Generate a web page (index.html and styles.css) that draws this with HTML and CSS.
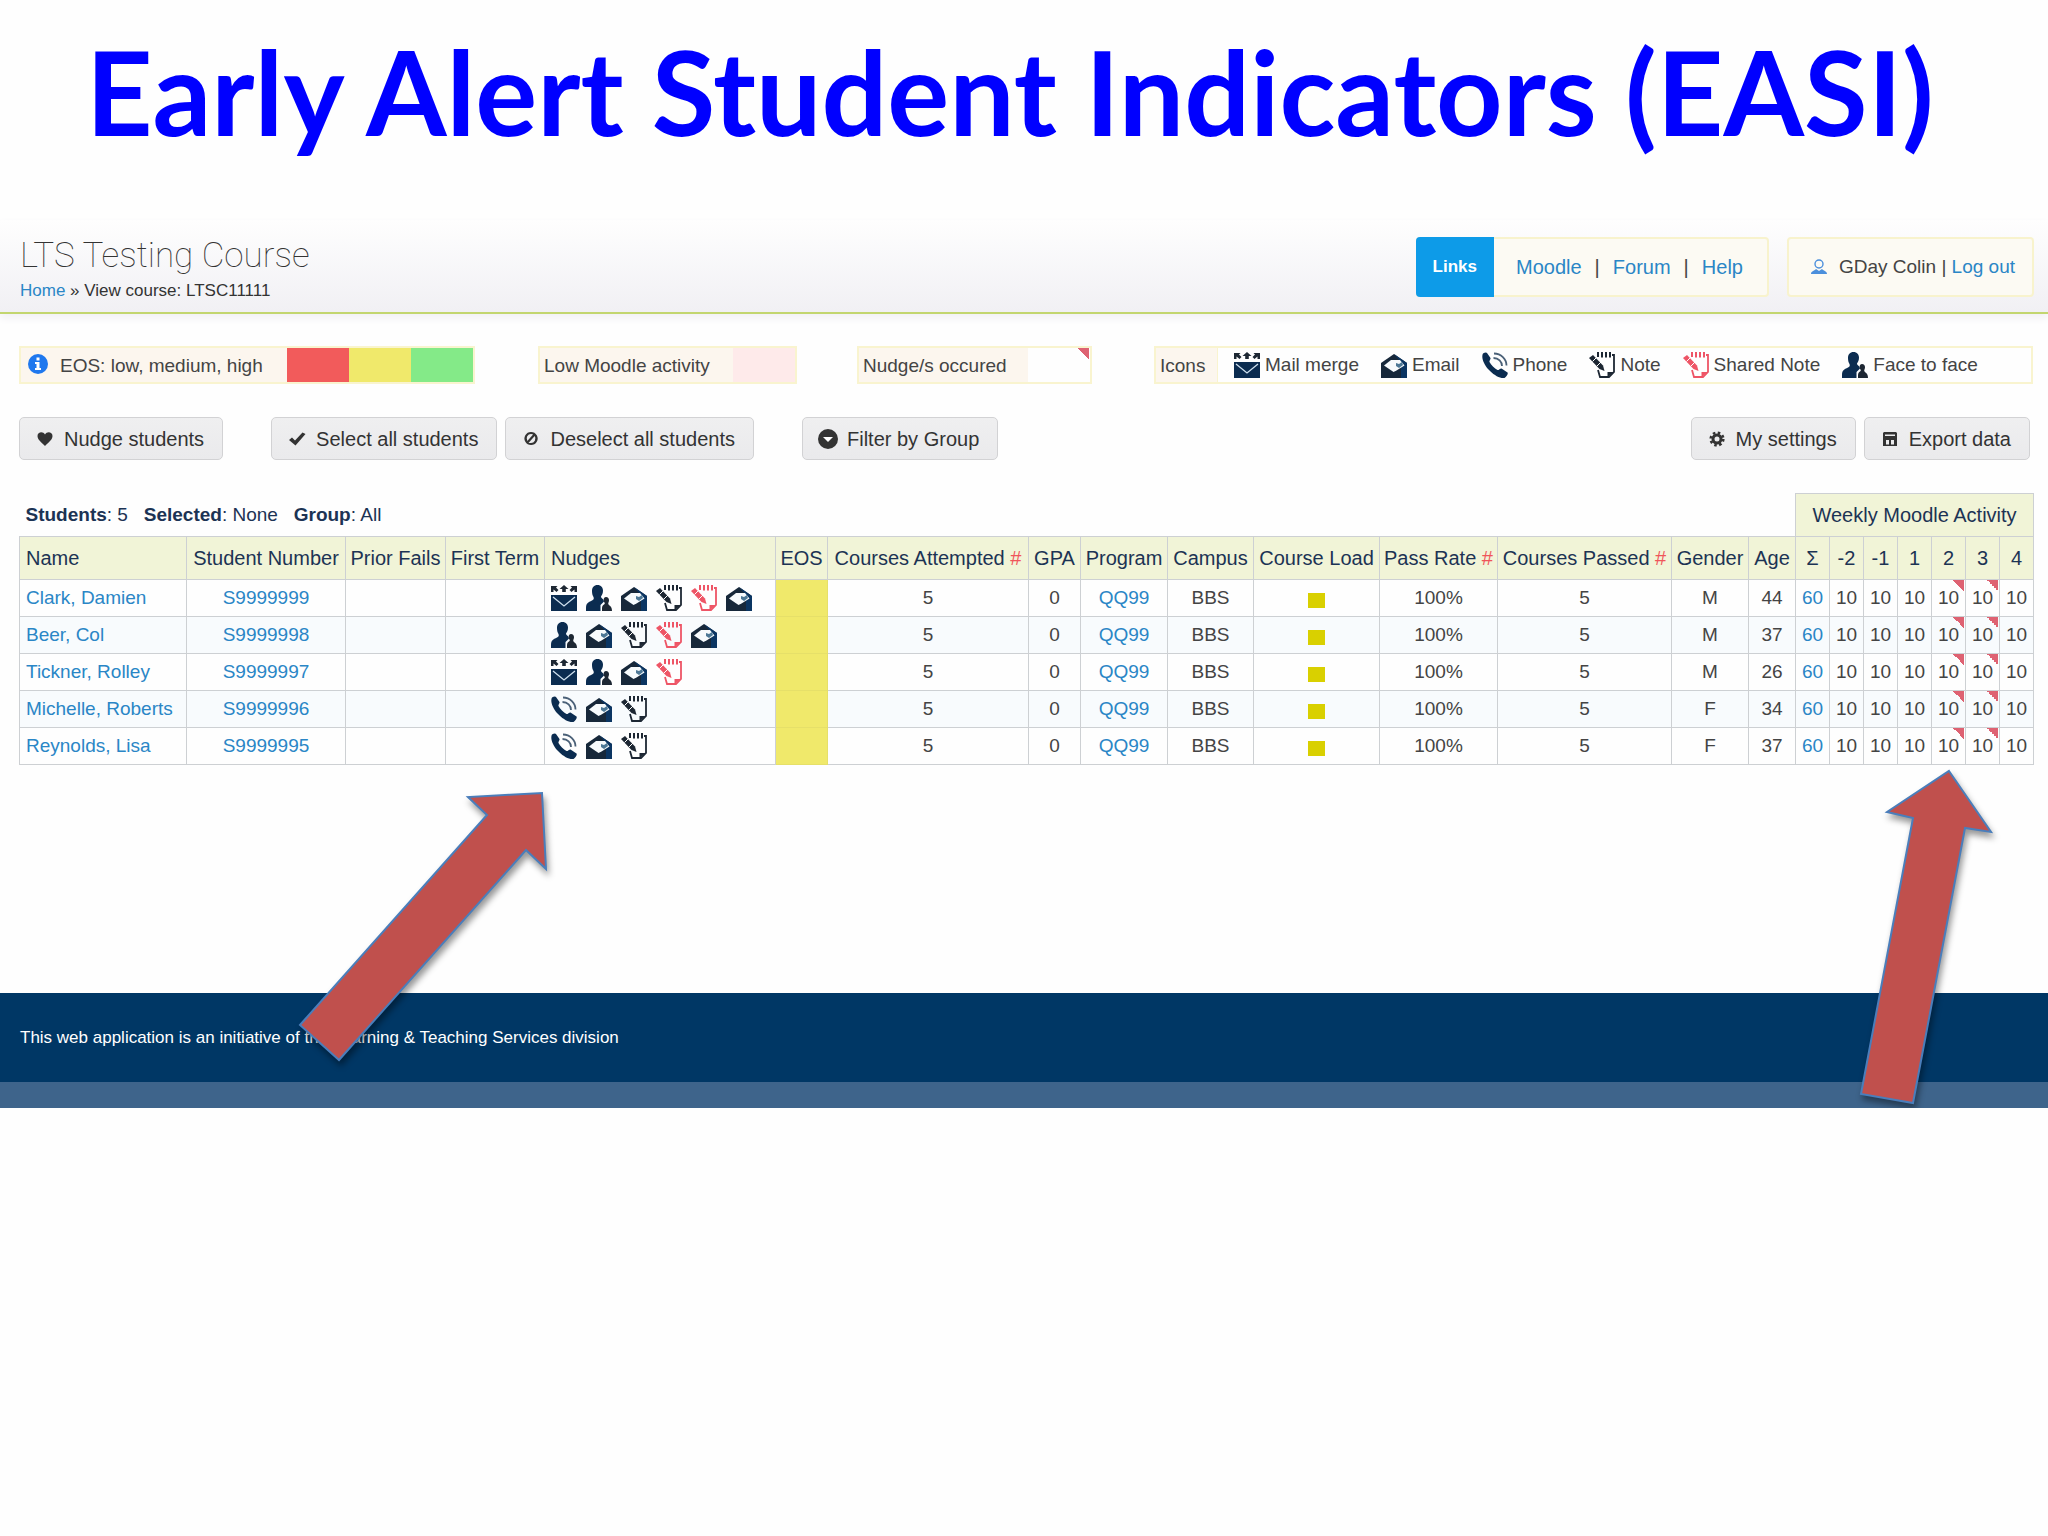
FILE: index.html
```html
<!DOCTYPE html>
<html lang="en">
<head>
    <meta charset="UTF-8">
    <meta name="viewport" content="width=device-width, initial-scale=1.0">
    <title>Early Alert Student Indicators (EASI)</title>
    <link rel="stylesheet" href="styles.css">
</head>
<body>
    <!-- icon set -->
    <svg class="sprite" aria-hidden="true">
        <symbol id="i-merge" viewBox="0 0 26 26">
            <path fill="#1d2733" d="M0 1h6.500L5 2.500 7.500 5 5.500 7 2.500 4.500V7H0zM13 0l4.500 4H14.800v3h-3.600V4H8.500zM26 1h-6.500L21 2.500 18.500 5l2 2 3-2.500V7H26z"/>
            <path fill="#0b2c50" d="M0 10h26v16H0z"/>
            <path fill="none" stroke="#cfe0ee" stroke-width="1.300" d="M2 12l11 9 11-9"/>
        </symbol>
        <symbol id="i-face" viewBox="0 0 26 26">
            <path fill="#0b2c50" d="M11.500 0C15 0 17 2.500 17 5.500c0 3-1 4.500-2 6 0 2 3 2.500 3 5L14.500 20v6H0v-3c0-5 2-5.500 6-7.500 2-1 2-2 1.500-3.500C6.500 10.500 6 8.500 6 6c0-3.500 2-6 5.500-6z"/>
            <path fill="#1d2733" d="M20 12c2 0 3 1.300 3 3.200 0 1.500-.6 2.300-.8 3.300.3 2.500 3.800 1.500 3.800 7.500H16c0-4 0-5.500 2-6.500 1-.5 1-1.500.3-2.300-.5-.7-.7-1.300-.7-2.200 0-1.800 1-3 2.400-3z"/>
        </symbol>
        <symbol id="i-email" viewBox="0 0 26 26">
            <path fill="#17283a" d="M13 2l13 9v15H0V11z"/>
            <path fill="#0b3562" d="M13 2l13 9v15H20V10z"/>
            <path fill="#f7fbfd" d="M3 13.500L10 8h9l4.500 5.500-8 5-3 1.500z"/>
            <path fill="#4d7896" d="M15 11l3 1 3-2 1 3-4 3-3-2z"/>
        </symbol>
        <symbol id="i-phone" viewBox="0 0 26 26">
            <path fill="#0b2c50" d="M1 1.500C2.500.5 4.500 0 5 1l3.500 5c.5 1-1.500 3-1 4 1.500 3 5 6.500 8 8 1 .5 3-2 4-1.500l6 4c1 1-1 4-3 5.500-4 1-11-3-16-8.500S-1 5 1 1.500z"/>
            <path fill="none" stroke="#4a6077" stroke-width="1.800" d="M12 1.500c7 0 12.500 5.500 12.500 12M11.500 6c5 0 8.500 3.500 8.500 8"/>
        </symbol>
        <symbol id="i-note" viewBox="0 0 26 26">
            <path fill="none" stroke="currentColor" stroke-width="1.800" d="M23 3h2v17l-5 5h-9l-2-7"/>
            <path fill="currentColor" d="M8 0h2v5H8zM12 0h2v5.500h-2zM16 0h2v5.500h-2zM20 0h2v5.500h-2zM18.500 25v-5H25z"/>
            <path fill="currentColor" d="M0 6l4-3 10 10.500 1.500 5.500-5-2z"/>
            <path fill="none" stroke="#fff" stroke-width="1" d="M3.500 9.500l4-4M8 14l4-4"/>
        </symbol>
        <symbol id="i-info" viewBox="0 0 20 20">
            <circle cx="10" cy="10" r="10" fill="#1f78ee"/>
            <path fill="#fff" d="M8.500 3.500h3v3h-3zM7 8h4.500v6H13v2H7v-2h1.500v-4H7z"/>
        </symbol>
        <symbol id="i-user" viewBox="0 0 16 16">
            <circle cx="8" cy="5" r="4" fill="none" stroke="#4b8fdc" stroke-width="1.400"/>
            <path fill="#4b8fdc" d="M0 15c0-3 3-3 5-5l3 2 3-2c2 2 5 2 5 5z"/>
        </symbol>
        <symbol id="i-heart" viewBox="0 0 20 20"><path d="M10 17C6 13 2.500 10.500 2.500 7c0-4 5.500-5 7.500-1.500C12 2 17.500 3 17.500 7c0 3.500-3.500 6-7.500 10z"/></symbol>
        <symbol id="i-check" viewBox="0 0 20 20"><path d="M2 11l3-2.500 3 3L15.500 3.500 18.500 5 8.500 16.500z"/></symbol>
        <symbol id="i-ban" viewBox="0 0 20 20"><path fill="none" stroke="currentColor" stroke-width="2.200" d="M10 4a5.500 5.500 0 1 0 .1 0zM6 14l8-9"/></symbol>
        <symbol id="i-down" viewBox="0 0 20 20"><circle cx="10" cy="10" r="10"/><path fill="#fff" d="M5 8h10l-5 5z"/></symbol>
        <symbol id="i-gear" viewBox="0 0 20 20">
            <circle cx="10" cy="10" r="4" fill="none" stroke="currentColor" stroke-width="3"/>
            <circle cx="10" cy="10" r="6.300" fill="none" stroke="currentColor" stroke-width="2.600" stroke-dasharray="2.500 2.450"/>
        </symbol>
        <symbol id="i-disk" viewBox="0 0 20 20"><path fill-rule="evenodd" d="M4 3h12l1 1v13H3V4zM5 7h10V5.500H5zM6 15.500h3V11H6zM11 15.500h3V11h-3z"/></symbol>
    </svg>

    <h1 class="slide-title">Early Alert Student Indicators (EASI)</h1>

    <header class="top">
        <div>
            <h2 class="course">LTS Testing Course</h2>
            <p class="crumbs"><a href="#">Home</a> » View course: LTSC11111</p>
        </div>
        <div class="top-right">
            <nav class="links">
                <strong>Links</strong>
                <a href="#">Moodle</a><span>|</span><a href="#">Forum</a><span>|</span><a href="#">Help</a>
            </nav>
            <div class="user">
                <svg><use href="#i-user"/></svg>
                <span>GDay Colin | <a href="#">Log out</a></span>
            </div>
        </div>
    </header>

    <main>
        <div class="legend">
            <div class="key eos-key">
                <div class="label"><svg class="info"><use href="#i-info"/></svg>EOS: low, medium, high</div>
                <div class="swatch low"></div>
                <div class="swatch medium"></div>
                <div class="swatch high"></div>
            </div>
            <div class="key activity-key">
                <div class="label">Low Moodle activity</div>
                <div class="swatch inactive"></div>
            </div>
            <div class="key nudge-key">
                <div class="label">Nudge/s occured</div>
                <div class="swatch nudged"></div>
            </div>
            <div class="key icon-key">
                <div class="label">Icons</div>
                <ul>
                    <li><svg class="icon"><use href="#i-merge"/></svg>Mail merge</li>
                    <li><svg class="icon"><use href="#i-email"/></svg>Email</li>
                    <li><svg class="icon"><use href="#i-phone"/></svg>Phone</li>
                    <li><svg class="icon"><use href="#i-note"/></svg>Note</li>
                    <li><svg class="icon shared"><use href="#i-note"/></svg>Shared Note</li>
                    <li><svg class="icon"><use href="#i-face"/></svg>Face to face</li>
                </ul>
            </div>
        </div>

        <div class="toolbar">
            <button type="button"><svg><use href="#i-heart"/></svg>Nudge students</button>
            <div class="group">
                <button type="button"><svg><use href="#i-check"/></svg>Select all students</button>
                <button type="button"><svg><use href="#i-ban"/></svg>Deselect all students</button>
            </div>
            <button type="button"><svg><use href="#i-down"/></svg>Filter by Group</button>
            <div class="group end">
                <button type="button"><svg><use href="#i-gear"/></svg>My settings</button>
                <button type="button"><svg><use href="#i-disk"/></svg>Export data</button>
            </div>
        </div>

        <table class="students">
            <colgroup>
                <col class="c-name"><col class="c-number"><col class="c-fails"><col class="c-term"><col class="c-nudges">
                <col class="c-eos"><col class="c-attempted"><col class="c-gpa"><col class="c-program"><col class="c-campus">
                <col class="c-load"><col class="c-rate"><col class="c-passed"><col class="c-gender"><col class="c-age">
                <col class="c-week" span="7">
            </colgroup>
            <thead>
                <tr>
                    <td class="summary" colspan="15"><b>Students</b>: 5 &nbsp; <b>Selected</b>: None &nbsp; <b>Group</b>: All</td>
                    <th colspan="7">Weekly Moodle Activity</th>
                </tr>
                <tr>
                    <th class="left">Name</th>
                    <th>Student Number</th>
                    <th>Prior Fails</th>
                    <th>First Term</th>
                    <th class="left">Nudges</th>
                    <th>EOS</th>
                    <th>Courses Attempted <i>#</i></th>
                    <th>GPA</th>
                    <th>Program</th>
                    <th>Campus</th>
                    <th>Course Load</th>
                    <th>Pass Rate <i>#</i></th>
                    <th>Courses Passed <i>#</i></th>
                    <th>Gender</th>
                    <th>Age</th>
                    <th>Σ</th><th>-2</th><th>-1</th><th>1</th><th>2</th><th>3</th><th>4</th>
                </tr>
            </thead>
            <tbody>
                <tr>
                    <td class="left"><a href="#">Clark, Damien</a></td>
                    <td><a href="#">S9999999</a></td>
                    <td></td>
                    <td></td>
                    <td class="left"><div class="nudges">
                        <svg class="icon"><use href="#i-merge"/></svg>
                        <svg class="icon"><use href="#i-face"/></svg>
                        <svg class="icon"><use href="#i-email"/></svg>
                        <svg class="icon"><use href="#i-note"/></svg>
                        <svg class="icon shared"><use href="#i-note"/></svg>
                        <svg class="icon"><use href="#i-email"/></svg>
                    </div></td>
                    <td class="medium"></td>
                    <td>5</td><td>0</td><td><a href="#">QQ99</a></td><td>BBS</td><td><span class="load"></span></td><td>100%</td><td>5</td><td>M</td><td>44</td>
                    <td><a href="#">60</a></td><td>10</td><td>10</td><td>10</td><td class="nudged">10</td><td class="nudged">10</td><td>10</td>
                </tr>
                <tr>
                    <td class="left"><a href="#">Beer, Col</a></td>
                    <td><a href="#">S9999998</a></td>
                    <td></td>
                    <td></td>
                    <td class="left"><div class="nudges">
                        <svg class="icon"><use href="#i-face"/></svg>
                        <svg class="icon"><use href="#i-email"/></svg>
                        <svg class="icon"><use href="#i-note"/></svg>
                        <svg class="icon shared"><use href="#i-note"/></svg>
                        <svg class="icon"><use href="#i-email"/></svg>
                    </div></td>
                    <td class="medium"></td>
                    <td>5</td><td>0</td><td><a href="#">QQ99</a></td><td>BBS</td><td><span class="load"></span></td><td>100%</td><td>5</td><td>M</td><td>37</td>
                    <td><a href="#">60</a></td><td>10</td><td>10</td><td>10</td><td class="nudged">10</td><td class="nudged">10</td><td>10</td>
                </tr>
                <tr>
                    <td class="left"><a href="#">Tickner, Rolley</a></td>
                    <td><a href="#">S9999997</a></td>
                    <td></td>
                    <td></td>
                    <td class="left"><div class="nudges">
                        <svg class="icon"><use href="#i-merge"/></svg>
                        <svg class="icon"><use href="#i-face"/></svg>
                        <svg class="icon"><use href="#i-email"/></svg>
                        <svg class="icon shared"><use href="#i-note"/></svg>
                    </div></td>
                    <td class="medium"></td>
                    <td>5</td><td>0</td><td><a href="#">QQ99</a></td><td>BBS</td><td><span class="load"></span></td><td>100%</td><td>5</td><td>M</td><td>26</td>
                    <td><a href="#">60</a></td><td>10</td><td>10</td><td>10</td><td class="nudged">10</td><td class="nudged">10</td><td>10</td>
                </tr>
                <tr>
                    <td class="left"><a href="#">Michelle, Roberts</a></td>
                    <td><a href="#">S9999996</a></td>
                    <td></td>
                    <td></td>
                    <td class="left"><div class="nudges">
                        <svg class="icon"><use href="#i-phone"/></svg>
                        <svg class="icon"><use href="#i-email"/></svg>
                        <svg class="icon"><use href="#i-note"/></svg>
                    </div></td>
                    <td class="medium"></td>
                    <td>5</td><td>0</td><td><a href="#">QQ99</a></td><td>BBS</td><td><span class="load"></span></td><td>100%</td><td>5</td><td>F</td><td>34</td>
                    <td><a href="#">60</a></td><td>10</td><td>10</td><td>10</td><td class="nudged">10</td><td class="nudged">10</td><td>10</td>
                </tr>
                <tr>
                    <td class="left"><a href="#">Reynolds, Lisa</a></td>
                    <td><a href="#">S9999995</a></td>
                    <td></td>
                    <td></td>
                    <td class="left"><div class="nudges">
                        <svg class="icon"><use href="#i-phone"/></svg>
                        <svg class="icon"><use href="#i-email"/></svg>
                        <svg class="icon"><use href="#i-note"/></svg>
                    </div></td>
                    <td class="medium"></td>
                    <td>5</td><td>0</td><td><a href="#">QQ99</a></td><td>BBS</td><td><span class="load"></span></td><td>100%</td><td>5</td><td>F</td><td>37</td>
                    <td><a href="#">60</a></td><td>10</td><td>10</td><td>10</td><td class="nudged">10</td><td class="nudged">10</td><td>10</td>
                </tr>
            </tbody>
        </table>
    </main>

    <footer>
        <p>This web application is an initiative of the Learning &amp; Teaching Services division</p>
    </footer>

    <!-- arrows over the nudges and the weekly activity -->
    <svg class="arrow arrow-nudges" viewBox="0 0 250 270"><path d="M243 3l4 76-20-19L40 270 1 235 188 25 169 7z"/></svg>
    <svg class="arrow arrow-weeks" viewBox="0 0 132 336"><path d="M89 2l42 61-26-4L53 334 1 325 53 49 27 43z"/></svg>
</body>
</html>
```
FILE: styles.css
```css
* {
    box-sizing: border-box;
}
body {
    position: relative;
    margin: 0;
    background-color: #fefefe;
    color: #444;
    font-family: "Liberation Sans", Arial, sans-serif;
    font-size: 20px;
    line-height: 24px;
}
a {
    color: #2a86c6;
    text-decoration: none;
}
.sprite {
    display: none;
}
.slide-title {
    margin: 0;
    padding: 20px 28px 0 0;
    height: 220px;
    color: #0000ff;
    font-family: Lato, sans-serif;
    font-size: 116px;
    font-weight: 700;
    line-height: 144px;
    text-align: center;
    white-space: nowrap;
}

/* page header */
.top {
    display: flex;
    justify-content: space-between;
    align-items: flex-start;
    height: 94px;
    padding: 17px 14px 0 20px;
    background: linear-gradient(#fefefe, #f1f0f4);
    border-bottom: 2px solid #c3d66f;
    box-shadow: 0 4px 8px #f1f0f4;
}
.course {
    margin: 0;
    color: #333;
    font-family: Roboto, sans-serif;
    font-size: 35px;
    font-weight: 100;
    line-height: 38px;
}
.crumbs {
    margin: 0;
    color: #333;
    font-size: 17px;
    line-height: 32px;
}
.top-right {
    display: flex;
    gap: 18px;
}
.links,
.user {
    display: flex;
    align-items: center;
    height: 60px;
    background-color: #fcfaf3;
    border: 2px solid #f8f3cd;
    border-radius: 4px;
}
.links {
    gap: 13px;
    padding-right: 24px;
}
.links strong {
    margin: -2px 9px -2px -2px;
    padding: 0 17px;
    background-color: #0d9be8;
    border-radius: 4px 0 0 4px;
    color: #fff;
    font-size: 17px;
    line-height: 60px;
}
.user {
    gap: 12px;
    padding: 0 17px 0 22px;
    font-size: 19px;
}
.user svg {
    width: 16px;
    height: 16px;
}

main {
    padding: 32px 15px 0 19px;
}

/* legend */
.legend {
    display: flex;
    font-size: 19px;
}
.key {
    display: flex;
    height: 38px;
    border: 2px solid #f9f4cf;
    line-height: 36px;
}
.label {
    padding: 0 4px;
    background-color: #fcf6ee;
}
.eos-key {
    width: 456px;
    margin-right: 63px;
}
.eos-key .label {
    display: flex;
    flex: 1;
    gap: 12px;
    padding-left: 7px;
}
.info {
    width: 20px;
    height: 20px;
    margin-top: 6px;
}
.swatch {
    width: 62px;
}
.low {
    background-color: #f25b5b;
}
.medium {
    background-color: #f0e96b;
}
.high {
    background-color: #84ea88;
}
.activity-key {
    width: 259px;
    margin-right: 60px;
}
.activity-key .label,
.nudge-key .label {
    flex: 1;
}
.inactive {
    background-color: #feeaea;
}
.nudge-key {
    width: 235px;
    margin-right: 62px;
}
.nudged {
    background: linear-gradient(to top right, transparent 50%, #de6272 50%) top right 1px / 11px 11px no-repeat;
}
.icon-key {
    flex: 1;
}
.icon-key .label {
    width: 62px;
    border-right: 1px solid #f9f4cf;
}
.icon-key ul {
    display: flex;
    gap: 22px;
    margin: 0;
    padding: 0 0 0 16px;
    list-style: none;
    line-height: 32px;
}
.icon-key li {
    display: flex;
    align-items: center;
    gap: 5px;
    height: 34px;
}
.icon {
    width: 26px;
    height: 26px;
    color: #1d2733;
}
.shared {
    color: #ee5566;
}

/* buttons */
.toolbar {
    display: flex;
    gap: 48px;
    margin: 33px 3px 33px 0;
}
.group {
    display: flex;
    gap: 8px;
}
.end {
    margin-left: auto;
}
button {
    display: flex;
    align-items: center;
    gap: 9px;
    height: 43px;
    padding: 0 18px 0 15px;
    background: linear-gradient(#efeff0, #eaeaec);
    border: 1px solid #d2d2d4;
    border-radius: 5px;
    color: #333;
    font: inherit;
    white-space: nowrap;
}
button svg {
    width: 20px;
    height: 20px;
    fill: currentColor;
}

/* students table */
.students {
    width: 100%;
    table-layout: fixed;
    border-collapse: collapse;
    text-align: center;
}
.students th,
.students td {
    height: 37px;
    padding: 0;
    border: 1px solid #cdd0d3;
    font-size: 19px;
    white-space: nowrap;
}
.students th {
    height: 43px;
    background-color: #f1f4d7;
    color: #1c3354;
    font-size: 20px;
    font-weight: 400;
}
.students i {
    color: #f0555a;
    font-style: normal;
}
.students tbody tr:nth-child(even) {
    background-color: #f8fbfd;
}
.students .left {
    padding-left: 6px;
    text-align: left;
}
.students .summary {
    padding-left: 6px;
    border: 0;
    color: #1c3354;
    text-align: left;
}
.students .medium {
    border-color: #e6e069;
}
.nudges {
    display: flex;
    gap: 9px;
}
.load {
    display: block;
    width: 17px;
    height: 15px;
    margin: 5px auto 0;
    background-color: #d9d000;
}
.c-name { width: 167px; }
.c-number { width: 159px; }
.c-fails { width: 100px; }
.c-term { width: 99px; }
.c-nudges { width: 231px; }
.c-eos { width: 52px; }
.c-attempted { width: 201px; }
.c-gpa { width: 52px; }
.c-program { width: 87px; }
.c-campus { width: 86px; }
.c-load { width: 126px; }
.c-rate { width: 118px; }
.c-passed { width: 174px; }
.c-gender { width: 77px; }
.c-age { width: 47px; }
.c-week { width: 34px; }

footer {
    margin-top: 228px;
    padding: 33px 20px 32px;
    background-color: #003765;
    border-bottom: 26px solid #3e648b;
    color: #fff;
    font-size: 17px;
}
footer p {
    margin: 0;
}

.arrow {
    position: absolute;
    overflow: visible;
    fill: #c0504d;
    stroke: #4a7ebb;
    stroke-width: 2px;
    filter: drop-shadow(2px 5px 3px rgba(0, 0, 0, 0.4));
}
.arrow-nudges {
    top: 790px;
    left: 299px;
    width: 250px;
    height: 270px;
}
.arrow-weeks {
    top: 769px;
    right: 56px;
    width: 132px;
    height: 336px;
}
```
